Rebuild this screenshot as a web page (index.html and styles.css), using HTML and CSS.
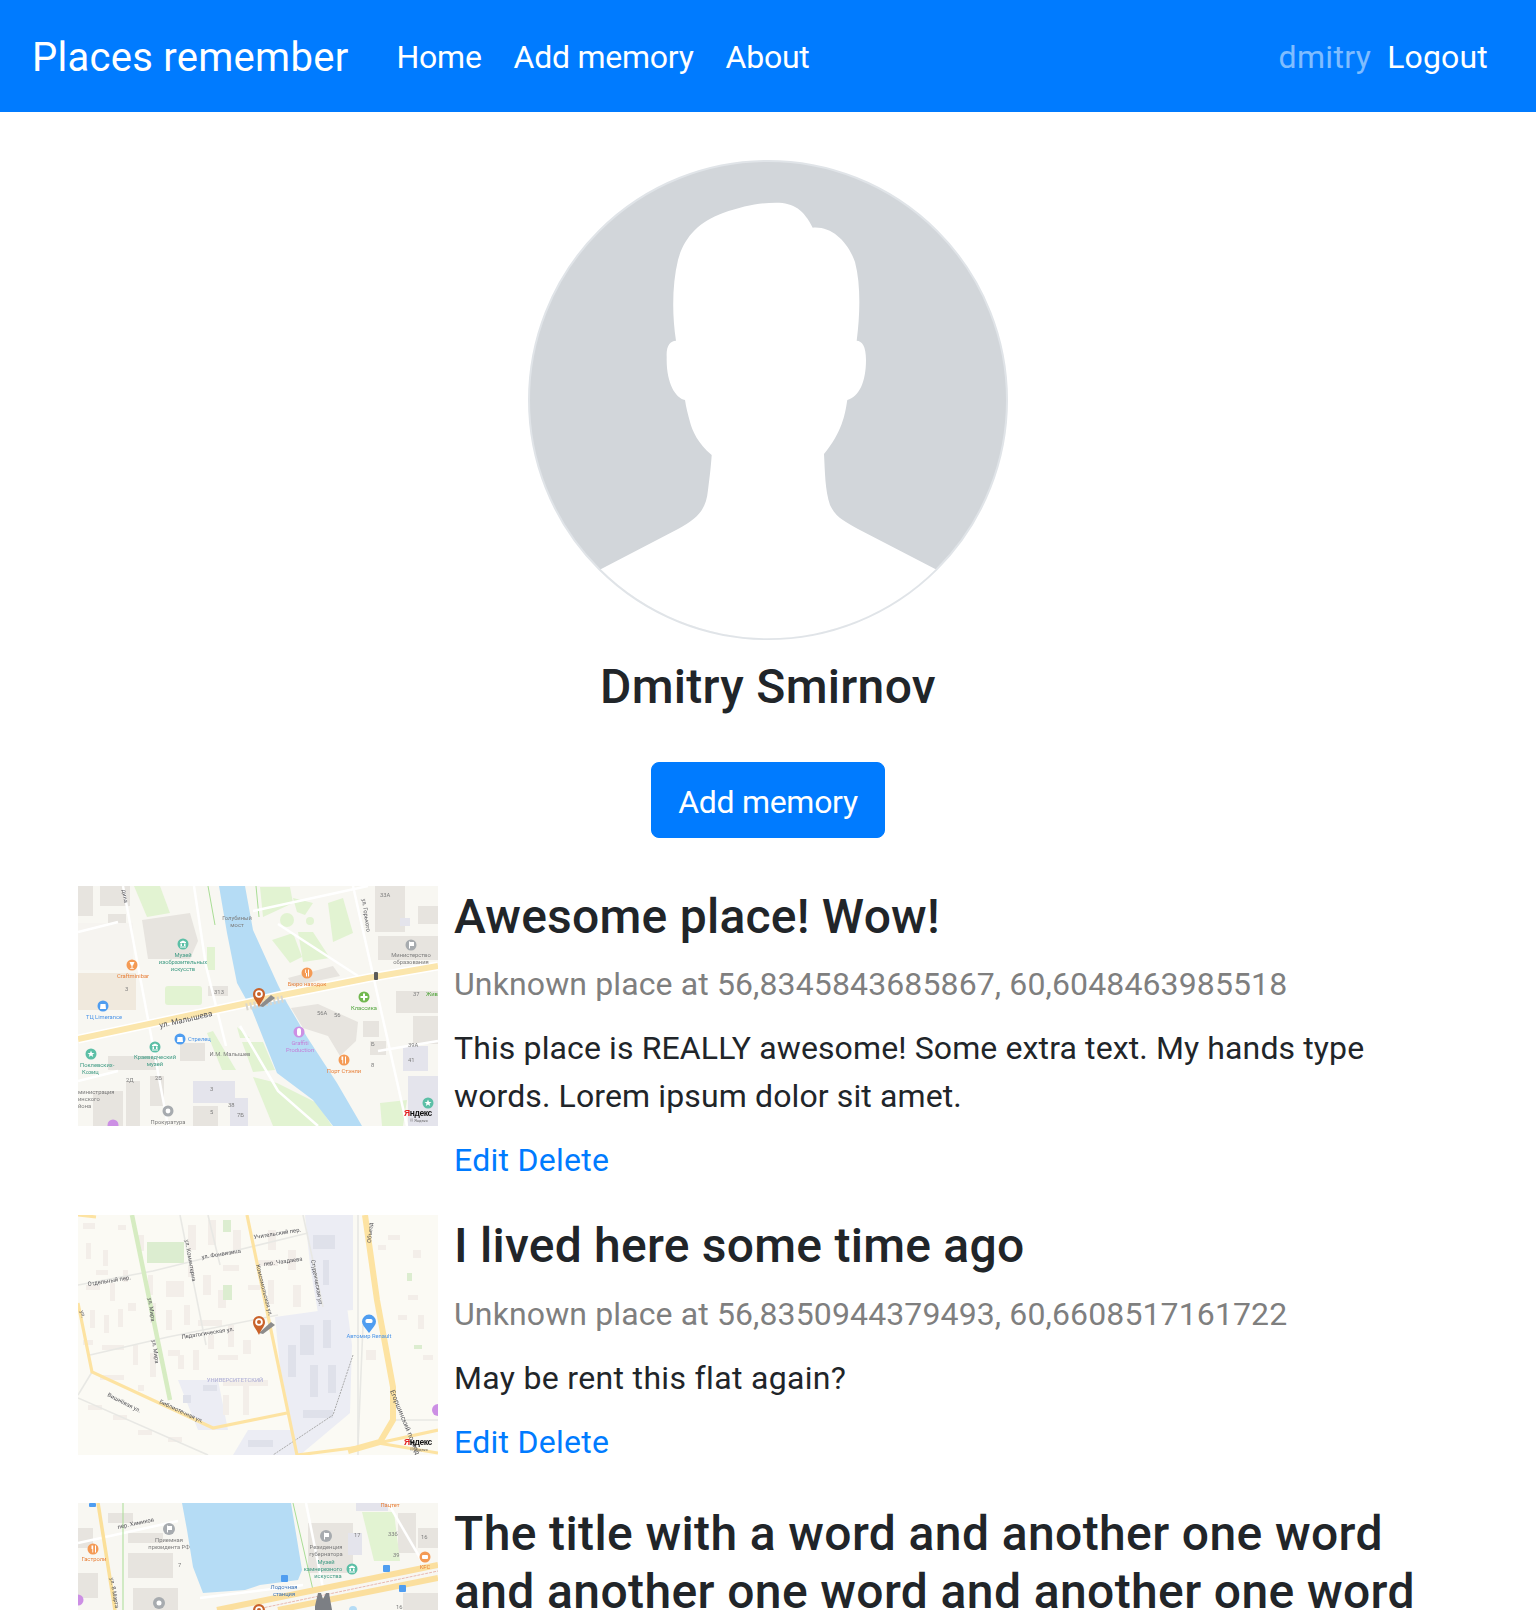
FILE: index.html
```html
<!DOCTYPE html>
<html lang="en">
<head>
<meta charset="utf-8">
<title>Places remember</title>
<link rel="stylesheet" href="styles.css">
</head>
<body>
<nav class="navbar">
  <a class="brand" href="#">Places remember</a>
  <ul class="nav-links">
    <li><a class="nav-link" href="#">Home</a></li>
    <li><a class="nav-link" href="#">Add memory</a></li>
    <li><a class="nav-link" href="#">About</a></li>
  </ul>
  <div class="nav-user">
    <span class="nav-link nav-name">dmitry</span>
    <a class="nav-link nav-logout" href="#">Logout</a>
  </div>
</nav>
<main class="container">
  <section class="profile">
    <svg class="avatar" viewBox="0 0 480 480" role="img" aria-label="Dmitry Smirnov">
      <circle class="avatar-bg" cx="240" cy="240" r="239"/>
      <path class="avatar-person" d="M72.7 409.3 L150 369 C170 358 178 350 180 330 C182 315 183 305 183.7 295 C170 284 164 270 162 262 C160 255 158 247 157 240 C147 238 138 222 138.7 197 C138 186 142 181 148 180.7 C144 155 144 125 150 100 C156 78 170 62 195 53 C215 46 232 42.7 248 42.7 C266 42.7 276 50 284.7 67.7 C304 66 320 82 327 102 C333 125 332 155 328.7 180.7 C334 181 338 186 338 200 C338 222 331 237 319.3 240 C317 255 314 272 296 294 C297 312 297 330 302 345 C308 358 318 362 330 369 L407.7 409.3 A 238 238 0 0 1 72.7 409.3 Z"/>
    </svg>
    <h2 class="profile-name">Dmitry Smirnov</h2>
    <a class="btn" href="#">Add memory</a>
  </section>

  <article class="memory">
    <svg class="map" viewBox="0 0 360 240" role="img" aria-label="Map">
      <rect class="m-bg" width="360" height="240"/>
      <g class="m-bld">
        <rect x="0" y="0" width="15" height="30"/><rect x="22" y="0" width="30" height="20"/><rect x="30" y="28" width="18" height="30"/><path d="M64 34 L112 27 L120 55 L112 73 H70 Z"/><rect x="0" y="37" width="55" height="47" class="m-light"/><rect x="0" y="87" width="58" height="37" class="m-warm"/>
        <rect x="130" y="100" width="20" height="10"/><rect x="297" y="0" width="30" height="46"/><rect x="300" y="50" width="60" height="24"/><rect x="322" y="32" width="10" height="8" class="m-blue"/><rect x="340" y="20" width="20" height="18"/>
        <path d="M213 122 L240 118 L280 136 L278 155 L262 170 L250 150 L225 142 Z"/><rect x="285" y="135" width="16" height="16"/><rect x="292" y="155" width="16" height="14"/><path d="M210 92 L255 80 L262 90 L215 100 Z"/>
        <rect x="318" y="105" width="42" height="22"/><rect x="335" y="130" width="25" height="28"/><rect x="325" y="160" width="25" height="25" class="m-blue"/><rect x="330" y="190" width="30" height="50" class="m-blue"/>
        <rect x="102" y="157" width="25" height="18"/><rect x="30" y="170" width="50" height="14"/><rect x="48" y="195" width="14" height="45"/><rect x="72" y="190" width="14" height="30"/>
        <rect x="115" y="195" width="42" height="22" class="m-blue"/><rect x="115" y="220" width="25" height="20"/><rect x="152" y="212" width="18" height="28" class="m-blue"/><rect x="15" y="205" width="30" height="35"/>
      </g>
      <g class="m-park">
        <path d="M56 0 H82 L92 27 L69 31 Z"/><path d="M182 1 H212 L215 17 L185 31 Z"/><path d="M215 12 L235 17 L227 29 L219 26 Z"/><path d="M250 17 L265 12 L275 47 L255 56 Z"/><path d="M194 54 L215 47 L224 71 L212 77 Z"/><path d="M220 46 H235 L252 72 L225 76 Z"/><circle cx="209" cy="34" r="7"/><circle cx="232" cy="35" r="4"/>
        <rect x="87" y="100" width="37" height="19" rx="3"/><path d="M129 147 L135 145 L158 184 H144 Z"/><path d="M159 141 L172 152 H162 Z"/><path d="M164 156 H185 L197 184 L175 186 Z"/><path d="M175 191 L199 197 L239 217 L254 240 H195 Z"/><path d="M302 217 L329 214 L325 240 H304 Z"/><rect x="129" y="61" width="8" height="23"/>
      </g>
      <path class="m-water" d="M141 0 H167 L175 44 L200 99 L209 117 L229 151 L259 197 L284 240 H255 L235 214 L199 187 L174 124 L159 97 L149 47 Z"/>
      <path class="m-thin-g" d="M130 0 L137 39"/><path class="m-thin-g" d="M178 0 L181 31"/>
      <g class="m-lane">
        <path d="M45 0 L90 240"/><path d="M275 0 L329 240"/><path d="M116 0 L128 80 L148 160"/><path d="M0 46 L40 36"/><path d="M175 25 L290 0"/><path d="M200 38 L280 90"/><path d="M300 165 L360 155"/><path d="M0 195 L40 185"/><path d="M162 140 L200 205 L240 240"/>
      </g>
      <path class="m-edge" d="M0 153 L165 118 L200 110 L290 92 L360 80"/>
      <path class="m-road" d="M0 153 L165 118 L200 110 L290 92 L360 80"/>
      <path class="m-bridge" d="M168 121 L205 113"/>
      <text class="mt m-gray" text-anchor="middle" x="159" y="34">Голубиный</text>
      <text class="mt m-gray" text-anchor="middle" x="159" y="41">мост</text>
      <text class="mt m-teal" text-anchor="middle" x="105" y="71">Музей</text>
      <text class="mt m-teal" text-anchor="middle" x="105" y="78">изобразительных</text>
      <text class="mt m-teal" text-anchor="middle" x="105" y="85">искусств</text>
      <text class="mt m-orange" text-anchor="middle" x="55" y="92">Craftminibar</text>
      <text class="mt m-blue-t" text-anchor="middle" x="26" y="133">ТЦ Limerance</text>
      <text class="mt m-gray" text-anchor="middle" x="141" y="108">313</text>
      <text class="mt m-orange" text-anchor="middle" x="229" y="100">Бюро находок</text>
      <text class="mt m-green" text-anchor="middle" x="286" y="124">Классика</text>
      <text class="mt m-gray" x="239" y="129">56А</text><text class="mt m-gray" x="256" y="131">56</text><text class="mt m-gray" x="293" y="160">Б</text><text class="mt m-gray" x="293" y="181">8</text><text class="mt m-gray" x="330" y="161">39А</text><text class="mt m-gray" x="330" y="176">41</text><text class="mt m-gray" x="335" y="110">37</text><text class="mt m-gray" x="302" y="11">33А</text><text class="mt m-gray" x="132" y="205">3</text><text class="mt m-gray" x="132" y="228">5</text><text class="mt m-gray" x="150" y="221">38</text><text class="mt m-gray" x="159" y="231">7Б</text><text class="mt m-gray" x="48" y="196">2Д</text><text class="mt m-gray" x="77" y="194">2Б</text><text class="mt m-gray" x="47" y="105">3</text>
      <text class="mt m-dark m-street" transform="translate(82 142) rotate(-13)">ул. Малышева</text>
      <text class="mt m-dark" transform="translate(284 13) rotate(82)">ул. Горького</text>
      <text class="mt m-dark" transform="translate(44 4) rotate(80)">дина</text>
      <text class="mt m-blue-t" x="110" y="155">Стрелец</text>
      <text class="mt m-gray" text-anchor="middle" x="152" y="170">И.М. Малышев</text>
      <text class="mt m-teal" text-anchor="middle" x="77" y="173">Краеведческий</text>
      <text class="mt m-teal" text-anchor="middle" x="77" y="180">музей</text>
      <text class="mt m-teal" x="2" y="181">Поклевских-</text>
      <text class="mt m-teal" x="4" y="188">Козиц</text>
      <text class="mt m-purple" text-anchor="middle" x="222" y="159">Graffiti</text>
      <text class="mt m-purple" text-anchor="middle" x="222" y="166">Production</text>
      <text class="mt m-orange" text-anchor="middle" x="266" y="187">Порт Стэнли</text>
      <text class="mt m-gray" text-anchor="middle" x="333" y="71">Министерство</text>
      <text class="mt m-gray" text-anchor="middle" x="333" y="78">образования</text>
      <text class="mt m-gray" text-anchor="middle" x="90" y="238">Прокуратура</text>
      <text class="mt m-gray" x="0" y="208">министрация</text><text class="mt m-gray" x="0" y="215">инского</text><text class="mt m-gray" x="0" y="222">йона</text>
      <text class="mt m-green" x="348" y="110">Жив</text>
      <g class="m-pins">
        <circle class="c-teal" cx="105" cy="58" r="5.5"/><circle class="c-orange" cx="54" cy="79" r="5.5"/><circle class="c-blue" cx="25" cy="120" r="5.5"/><circle class="c-orange" cx="229" cy="87" r="5.5"/><circle class="c-gray" cx="333" cy="59" r="5.5"/><circle class="c-green" cx="286" cy="111" r="5.5"/><circle class="c-teal" cx="77" cy="161" r="5.5"/><circle class="c-blue" cx="102" cy="153" r="5.5"/><circle class="c-teal" cx="13" cy="168" r="5.5"/><circle class="c-purple" cx="221" cy="146" r="5.5"/><circle class="c-orange" cx="266" cy="174" r="5.5"/><circle class="c-gray" cx="90" cy="225" r="5.5"/><circle class="c-purple" cx="35" cy="239" r="5.5"/><circle class="c-teal" cx="350" cy="217" r="5.5"/>
      </g>
      <g class="m-glyphs">
        <path d="M102 56 L105 54.5 L108 56 V57 H102 Z M102.5 57.5 H104 V60 H102.5 Z M106 57.5 H107.5 V60 H106 Z M102 60.5 H108 V61.5 H102 Z"/>
        <path d="M51.5 76 H56.5 L55 79.5 H54.5 V82 H55.8 V82.8 H52.2 V82 H53.5 V79.5 H53 Z"/>
        <path d="M22.5 118 H27.5 L28 123 H22 Z"/><path d="M99.5 151 H104.5 L105 156 H99 Z"/>
        <path d="M228 83.5 V87 H227.2 V83.5 Z M231 83.5 V90.5 H230 V83.5 Z M228 87 H229 V90.5 H228 Z"/><path d="M263.5 170.5 V174 H264.3 V177.5 H265.2 V170.5 Z M267 170.5 V177.5 H268 V170.5 Z"/>
        <path d="M331 55.5 V62.5 H332 V60 H336 V56 H332 V55.5 Z"/>
        <path d="M285 107.5 H287 V110 H289.5 V112 H287 V114.5 H285 V112 H282.5 V110 H285 Z"/>
        <path d="M74 159 L77 157.5 L80 159 V160 H74 Z M74.5 160.5 H76 V163 H74.5 Z M78 160.5 H79.5 V163 H78 Z M74 163.5 H80 V164.5 H74 Z"/>
        <path d="M13 164.5 L14 167 H16.5 L14.5 168.6 L15.2 171 L13 169.6 L10.8 171 L11.5 168.6 L9.5 167 H12 Z"/>
        <path d="M350 213.5 L351 216 H353.5 L351.5 217.6 L352.2 220 L350 218.6 L347.8 220 L348.5 217.6 L346.5 216 H349 Z"/>
        <circle cx="90" cy="225" r="2.4"/><rect x="219" y="142" width="4" height="8" rx="2"/>
      </g>
      <rect class="m-light-sig" x="296" y="86" width="4" height="8" rx="1"/>
      <path class="m-shadow" d="M181 120 L193 109 L197 112 L185 121 Z"/>
      <path class="m-marker" d="M181 121 C178 114 175 113 175 108 A6 6 0 1 1 187 108 C187 112 184 114 181 121 Z"/>
      <circle class="m-marker-in" cx="181" cy="108" r="3.8"/><circle class="m-marker-dot" cx="181" cy="108" r="2"/>
      <text class="ya" x="326" y="230"><tspan class="ya-red">Я</tspan>ндекс</text>
      <text class="ya-c" x="332" y="236">© Яндекс</text>
    </svg>
    <div class="memory-body">
      <h4 class="memory-title">Awesome place! Wow!</h4>
      <p class="memory-place">Unknown place at 56,8345843685867, 60,6048463985518</p>
      <p class="memory-text">This place is REALLY awesome! Some extra text. My hands type words. Lorem ipsum dolor sit amet.</p>
      <div class="memory-actions"><a href="#">Edit</a> <a href="#">Delete</a></div>
    </div>
  </article>

  <article class="memory">
    <svg class="map" viewBox="0 0 360 240" role="img" aria-label="Map">
      <rect class="m-bg2" width="360" height="240"/>
      <path class="m-ind" d="M197 102 L269 92 L274 130 L272 198 L222 240 L215 220 L202 152 Z"/>
      <path class="m-ind" d="M227 0 H275 V95 L240 98 L232 50 Z"/>
      <path class="m-ind" d="M170 215 H215 L222 240 H155 Z"/>
      <path class="m-ind" d="M100 165 H140 L150 215 H120 Z"/>
      <g class="m-small">
        <rect x="5" y="8" width="12" height="6"/><rect x="8" y="28" width="5" height="16"/><rect x="25" y="35" width="5" height="16"/><rect x="40" y="10" width="8" height="5"/><rect x="8" y="70" width="14" height="5"/><rect x="32" y="68" width="5" height="18"/><rect x="12" y="95" width="5" height="18"/><rect x="26" y="100" width="5" height="18"/><rect x="40" y="94" width="5" height="18"/><rect x="24" y="130" width="22" height="5"/><rect x="22" y="160" width="24" height="5"/><rect x="55" y="130" width="5" height="20"/><rect x="70" y="60" width="5" height="20"/>
        <rect x="88" y="66" width="18" height="16"/><rect x="72" y="88" width="6" height="20"/><rect x="88" y="95" width="6" height="20"/><rect x="106" y="90" width="6" height="20"/><rect x="72" y="138" width="6" height="24"/><rect x="90" y="135" width="12" height="6"/><rect x="110" y="10" width="8" height="25"/><rect x="130" y="5" width="8" height="25"/><rect x="155" y="15" width="8" height="20"/><rect x="125" y="60" width="8" height="20"/><rect x="145" y="50" width="16" height="6"/><rect x="140" y="75" width="8" height="18"/><rect x="120" y="105" width="24" height="6"/><rect x="150" y="110" width="6" height="22"/><rect x="115" y="135" width="6" height="20"/><rect x="140" y="140" width="20" height="5"/><rect x="145" y="165" width="45" height="6"/><rect x="145" y="180" width="6" height="20"/><rect x="165" y="170" width="6" height="30"/><rect x="180" y="45" width="20" height="6"/><rect x="190" y="65" width="6" height="24"/><rect x="215" y="70" width="8" height="22"/><rect x="190" y="15" width="8" height="20"/><rect x="210" y="35" width="8" height="20"/>
        <rect x="10" y="190" width="14" height="5"/><rect x="35" y="200" width="14" height="5"/><rect x="60" y="215" width="14" height="5"/><rect x="90" y="222" width="14" height="5"/><rect x="288" y="135" width="10" height="10"/><rect x="310" y="20" width="12" height="5"/><rect x="330" y="80" width="10" height="5"/>
        <rect x="60" y="20" width="6" height="16"/><rect x="18" y="55" width="12" height="5"/><rect x="45" y="55" width="5" height="12"/><rect x="50" y="88" width="8" height="8"/><rect x="110" y="50" width="5" height="12"/><rect x="100" y="140" width="6" height="14"/><rect x="130" y="120" width="6" height="14"/><rect x="165" y="125" width="8" height="14"/><rect x="170" y="70" width="12" height="5"/><rect x="5" y="125" width="10" height="5"/><rect x="60" y="170" width="6" height="6"/><rect x="300" y="30" width="8" height="5"/><rect x="320" y="100" width="9" height="5"/><rect x="340" y="100" width="6" height="14"/><rect x="335" y="35" width="8" height="8"/><rect x="345" y="140" width="10" height="5"/>
      </g>
      <g class="m-indb">
        <rect x="235" y="20" width="22" height="14"/><rect x="245" y="45" width="6" height="25"/><rect x="222" y="110" width="14" height="30"/><rect x="245" y="105" width="8" height="28"/><rect x="210" y="130" width="8" height="32"/><rect x="232" y="150" width="8" height="32"/><rect x="250" y="150" width="8" height="28"/><rect x="225" y="195" width="30" height="8"/><rect x="170" y="225" width="25" height="7"/><rect x="105" y="180" width="8" height="8"/><rect x="125" y="170" width="14" height="6"/>
      </g>
      <rect class="m-park2" x="69" y="27" width="37" height="21"/>
      <rect class="m-park2" x="145" y="70" width="9" height="15"/><rect class="m-park2" x="145" y="5" width="8" height="12"/><rect class="m-park2" x="329" y="58" width="5" height="8"/><rect class="m-park2" x="336" y="130" width="8" height="4"/>
      <g class="m-lane2">
        <path d="M0 70 L75 56 L160 35 L230 18"/><path d="M102 0 L128 130"/><path d="M130 0 L142 50"/><path d="M225 0 L245 92"/><path d="M12 140 L90 122 L200 100"/><path d="M0 183 L130 240"/><path d="M14 157 L0 180"/><path d="M315 205 L360 205"/><path d="M280 0 V240"/><path d="M285 110 L280 230"/>
      </g>
      <path class="m-rail" d="M275 140 L255 200 L195 240"/>
      <path class="m-strip" d="M54 0 L92 185"/>
      <g class="m-y">
        <path d="M169 0 L219 240"/><path d="M0 88 L14 157 L135 213 L209 198"/><path class="m-y-w" d="M287 0 L299 85 L315 172 L315 205 L302 227 L270 236"/><path d="M219 240 L282 232 L360 215"/><path d="M300 228 L360 238"/><path d="M0 0 L18 2"/>
      </g>
      <text class="mt m-dark" transform="translate(176 24) rotate(-9)">Учительский пер.</text>
      <text class="mt m-dark" transform="translate(124 44) rotate(-9)">ул. Фонвизина</text>
      <text class="mt m-dark" transform="translate(186 51) rotate(-8)">пер. Чаадаева</text>
      <text class="mt m-dark" transform="translate(10 71) rotate(-9)">Отдельный пер.</text>
      <text class="mt m-dark" transform="translate(107 25) rotate(80)">ул. Коминтерна</text>
      <text class="mt m-dark" transform="translate(70 83) rotate(82)">ул. Мира</text>
      <text class="mt m-dark" transform="translate(74 125) rotate(82)">ул. Мира</text>
      <text class="mt m-dark" transform="translate(178 50) rotate(76)">Комсомольская ул.</text>
      <text class="mt m-dark" transform="translate(233 45) rotate(80)">Студенческая ул.</text>
      <text class="mt m-dark" transform="translate(104 124) rotate(-9)">Педагогическая ул.</text>
      <text class="mt m-dark" transform="translate(293 28) rotate(-85)">Объезд</text>
      <text class="mt m-dark" transform="translate(81 188) rotate(25)">Библиотечная ул.</text>
      <text class="mt m-dark" transform="translate(29 181) rotate(27)">Вишнёвая ул.</text>
      <text class="mt m-dark m-street2" transform="translate(312 176) rotate(68)">Егоршинский подход</text>
      <text class="mt m-dark" transform="translate(2 96) rotate(75)">ул.</text>
      <text class="mt m-blue-t" text-anchor="middle" x="291" y="123">Автомир Renault</text>
      <text class="mt m-lav" text-anchor="middle" x="157" y="167">УНИВЕРСИТЕТСКИЙ</text>
      <path class="c-blue" d="M291 118 L286 111.5 A7 7 0 1 1 296 111.5 Z"/><rect class="m-dot-w" x="287.5" y="104" width="7" height="4" rx="1.5"/>
      <circle class="c-purple" cx="360" cy="195" r="6"/>
      <path class="m-shadow" d="M181 118 L193 107 L197 110 L185 119 Z"/>
      <path class="m-marker" d="M181 120 C178 113 175 112 175 107 A6 6 0 1 1 187 107 C187 111 184 113 181 120 Z"/>
      <circle class="m-marker-in" cx="181" cy="107" r="3.8"/><circle class="m-marker-dot" cx="181" cy="107" r="2"/>
      <text class="ya" x="326" y="230"><tspan class="ya-red">Я</tspan>ндекс</text>
      <text class="ya-c" x="332" y="236">© Яндекс</text>
    </svg>
    <div class="memory-body">
      <h4 class="memory-title">I lived here some time ago</h4>
      <p class="memory-place">Unknown place at 56,8350944379493, 60,6608517161722</p>
      <p class="memory-text memory-text-short">May be rent this flat again?</p>
      <div class="memory-actions"><a href="#">Edit</a> <a href="#">Delete</a></div>
    </div>
  </article>

  <article class="memory">
    <svg class="map" viewBox="0 0 360 240" role="img" aria-label="Map">
      <rect class="m-bg" width="360" height="240"/>
      <g class="m-bld">
        <rect x="0" y="25" width="15" height="20"/><rect x="30" y="10" width="25" height="10"/><rect x="50" y="30" width="35" height="10"/><rect x="50" y="50" width="45" height="25"/><rect x="55" y="85" width="45" height="22"/><rect x="0" y="70" width="20" height="25"/><rect x="230" y="20" width="45" height="50"/><rect x="278" y="0" width="32" height="8" class="m-blue"/><rect x="270" y="30" width="14" height="22" class="m-blue"/><rect x="320" y="10" width="18" height="40"/><rect x="340" y="25" width="20" height="20"/><rect x="325" y="90" width="35" height="17"/>
      </g>
      <path class="m-park" d="M284 9 H316 L322 58 H296 Z"/>
      <path class="m-water" d="M104 0 H213 L224 67 L220 77 L182 82 L167 87 L125 90 L115 64 L109 27 Z"/>
      <circle class="m-water" cx="275" cy="107" r="4"/>
      <g class="m-lane"><path d="M0 40 L100 18"/><path d="M122 95 L225 82"/><path d="M228 0 L245 85"/><path d="M310 0 L345 60"/></g>
      <path class="m-thin-g" d="M45 0 V107"/><path class="m-thin-g" d="M215 0 L235 87"/>
      <path class="m-y3" d="M20 0 L37 107"/>
      <path class="m-road3" d="M139 107 L360 62"/><path class="m-road3" d="M200 107 L360 75"/>
      <path class="m-red3" d="M175 107 L360 68"/>
      <text class="mt m-dark" transform="translate(40 26) rotate(-12)">пер. Химиков</text>
      <text class="mt m-gray" text-anchor="middle" x="91" y="39">Приемная</text>
      <text class="mt m-gray" text-anchor="middle" x="91" y="46">президента РФ</text>
      <text class="mt m-gray" text-anchor="middle" x="248" y="46">Резиденция</text>
      <text class="mt m-gray" text-anchor="middle" x="248" y="53">губернатора</text>
      <text class="mt m-teal" text-anchor="middle" x="248" y="61">Музей</text>
      <text class="mt m-teal" text-anchor="middle" x="245" y="68">камнерезного</text>
      <text class="mt m-teal" text-anchor="middle" x="250" y="75">искусства</text>
      <text class="mt m-blue-d" text-anchor="middle" x="206" y="86">Лодочная</text>
      <text class="mt m-blue-d" text-anchor="middle" x="206" y="93">станция</text>
      <text class="mt m-orange" text-anchor="middle" x="16" y="58">Гастроли</text>
      <text class="mt m-orange" text-anchor="middle" x="312" y="4">Пацтет</text>
      <text class="mt m-orange" text-anchor="middle" x="347" y="66">KFC</text>
      <text class="mt m-dark" transform="translate(32 75) rotate(80)">ул. 8 Марта</text>
      <text class="mt m-gray" x="276" y="34">17</text><text class="mt m-gray" x="310" y="33">33б</text><text class="mt m-gray" x="315" y="54">39</text><text class="mt m-gray" x="343" y="36">16</text><text class="mt m-gray" x="100" y="64">7</text><text class="mt m-gray" x="318" y="106">16</text>
      <circle class="c-orange" cx="15" cy="46" r="5.5"/><circle class="c-gray" cx="91" cy="26" r="6"/><circle class="c-gray" cx="248" cy="33" r="6"/><circle class="c-teal" cx="274" cy="66" r="5.5"/><circle class="c-orange" cx="347" cy="54" r="5.5"/><circle class="c-gray" cx="81" cy="100" r="6"/><circle class="c-purple" cx="0" cy="97" r="5.5"/>
      <g class="m-glyphs">
        <path d="M13.5 42.5 V46 H14.3 V49.5 H15.2 V42.5 Z M17 42.5 V49.5 H18 V42.5 Z"/>
        <path d="M89 22.5 V29.5 H90 V27 H94 V23 H90 V22.5 Z"/><path d="M246 29.5 V36.5 H247 V34 H251 V30 H247 V29.5 Z"/>
        <path d="M271 64 L274 62.5 L277 64 V65 H271 Z M271.5 65.5 H273 V68 H271.5 Z M275 65.5 H276.5 V68 H275 Z M271 68.5 H277 V69.5 H271 Z"/>
        <rect x="344" y="52" width="6" height="4" rx="1"/><circle cx="81" cy="100" r="2.5"/>
      </g>
      <rect class="c-blue" x="203" y="72" width="7" height="7" rx="1"/><rect class="c-blue" x="305" y="62" width="7" height="7" rx="1"/><rect class="c-blue" x="321" y="82" width="7" height="7" rx="1"/><rect class="c-blue" x="11" y="0" width="7" height="4" rx="1"/>
      <path class="m-statue" d="M237 103 L240 90 H243 L245 96 L248 90 H251 L254 107 H237 Z"/>
      <path class="m-marker" d="M181 120 C178 113 175 112 175 107 A6 6 0 1 1 187 107 C187 111 184 113 181 120 Z"/>
      <circle class="m-marker-in" cx="181" cy="107" r="3.8"/><circle class="m-marker-dot" cx="181" cy="107" r="2"/>
    </svg>
    <div class="memory-body">
      <h4 class="memory-title memory-title-long">The title with a word and another one word and another one word and another one word</h4>
    </div>
  </article>
</main>
</body>
</html>
```
FILE: styles.css
```css
* { box-sizing: border-box; }
html, body { height: 1610px; overflow: hidden; }
body { margin: 0; font-family: Roboto, "Noto Sans", sans-serif; font-size: 32px; line-height: 1.5; color: #212529; background: #fff; }
a { text-decoration: none; color: #007bff; }

.navbar { display: flex; align-items: center; padding: 16px 32px; background: #007bff; }
.brand { font-size: 40px; line-height: 60px; padding: 12px 0 8px; margin-right: 32px; color: #fff; letter-spacing: .27px; }
.nav-links { display: flex; list-style: none; margin: 0; padding: 0; letter-spacing: -.25px; }
.nav-link { display: block; padding: 9px 16px 7px; color: #fff; }
.nav-user { display: flex; margin-left: auto; }
.nav-name { padding-right: 0; color: rgba(255,255,255,.5); letter-spacing: .33px; }
.nav-logout { letter-spacing: .17px; }

.container { padding: 48px 78px 0; }
.profile { display: flex; flex-direction: column; align-items: center; }
.avatar { display: block; width: 480px; height: 480px; }
.avatar-bg { fill: #d2d6da; stroke: #e0e4e8; stroke-width: 2; }
.avatar-person { fill: #fff; }
.profile-name { margin: 18px 0 46px; font-size: 48px; line-height: 57.6px; font-weight: 500; letter-spacing: .3px; }
.btn { display: block; padding: 15px 26px 11px; margin-bottom: 48px; color: #fff; background: #007bff; border: 1px solid #007bff; border-radius: 8px; letter-spacing: -.3px; }

.memory { display: flex; align-items: flex-start; margin-bottom: 32px; }
.map { display: block; flex: none; width: 360px; height: 240px; margin: 0 16px 16px 0; filter: blur(.35px); }
.memory-body { flex: 1; min-width: 0; }
.memory-title { margin: 2px 0 15px; font-size: 48px; line-height: 57.6px; font-weight: 500; letter-spacing: .24px; }
.memory-title-long { letter-spacing: .38px; }
.memory-place { margin: 0 0 16px; color: #7f7f7f; letter-spacing: .12px; }
.memory-text { margin: 0 0 16px; letter-spacing: .12px; }
.memory-text-short { letter-spacing: .33px; }
.memory-actions { margin: 0 0 -1px; letter-spacing: .28px; }

.m-bg { fill: #f8f7f2; }
.m-bg2 { fill: #fbfaf4; }
.m-bld rect, .m-bld path { fill: #e7e4df; }
.m-bld .m-light { fill: #f6f4f0; }
.m-bld .m-warm { fill: #f0e9dd; }
.m-bld .m-blue { fill: #e4e4ec; }
.m-park { fill: #e2f3d2; }
.m-water { fill: #b5dcf5; }
.m-lane path { fill: none; stroke: #fff; stroke-width: 2.5; }
.m-edge { fill: none; stroke: #fff; stroke-width: 9; }
.m-road { fill: none; stroke: #fbe6ad; stroke-width: 6; }
.m-bridge { fill: none; stroke: #d9d6ce; stroke-width: 7; stroke-dasharray: 2 2; }
.m-small rect { fill: #f3eee9; }
.m-ind { fill: #ecedf4; }
.m-indb rect { fill: #dfe1ea; }
.m-park2 { fill: #dcedd0; }
.m-lane2 path { fill: none; stroke: #e8e8e4; stroke-width: 1.6; }
.m-rail { fill: none; stroke: #a9a9a9; stroke-width: 1; stroke-dasharray: 2 1; }
.m-strip { fill: none; stroke: #d6ecc2; stroke-width: 4.5; }
.m-y path { fill: none; stroke: #fde3a2; stroke-width: 3.2; }
.m-y .m-y-w { stroke-width: 6; }
.m-thin-g { fill: none; stroke: #a9dd95; stroke-width: 1; }
.m-y3 { fill: none; stroke: #fbe09a; stroke-width: 3.5; }
.m-road3 { fill: none; stroke: #fbdf9e; stroke-width: 6; }
.m-red3 { fill: none; stroke: #e3a9a0; stroke-width: .8; stroke-dasharray: 3 1; }
.m-statue { fill: #7c7f84; }

.mt { font-family: Roboto, "Noto Sans", sans-serif; font-size: 5.8px; line-height: 1; }
.m-gray { fill: #7d7d7d; }
.m-dark { fill: #55555a; }
.m-teal { fill: #3f9b84; }
.m-orange { fill: #e8803a; }
.m-blue-t { fill: #4a94e8; }
.m-blue-d { fill: #3c74b8; }
.m-green { fill: #4fa43a; }
.m-purple { fill: #c47fd8; }
.m-lav { fill: #b5b5d8; font-weight: 500; }
.m-street { font-size: 8px; }
.m-street2 { font-size: 7px; }
.c-teal { fill: #5cbfa6; }
.c-orange { fill: #f49a55; }
.c-blue { fill: #4f9df0; }
.c-gray { fill: #a7abaf; }
.c-green { fill: #72b84f; }
.c-purple { fill: #cc8fe4; }
.m-glyphs path, .m-glyphs circle, .m-glyphs rect, .m-dot-w { fill: #fff; }
.m-light-sig { fill: #5b5b5b; }
.m-shadow { fill: #8c8c8c; }
.m-marker { fill: #c9622a; }
.m-marker-in { fill: #fff; }
.m-marker-dot { fill: #c9622a; }
.ya { font-family: "Liberation Sans", sans-serif; font-size: 8.5px; font-weight: 700; fill: #111; letter-spacing: -.4px; }
.ya-red { fill: #e31c1c; }
.ya-c { font-family: Roboto, sans-serif; font-size: 4px; fill: #666; }
```
